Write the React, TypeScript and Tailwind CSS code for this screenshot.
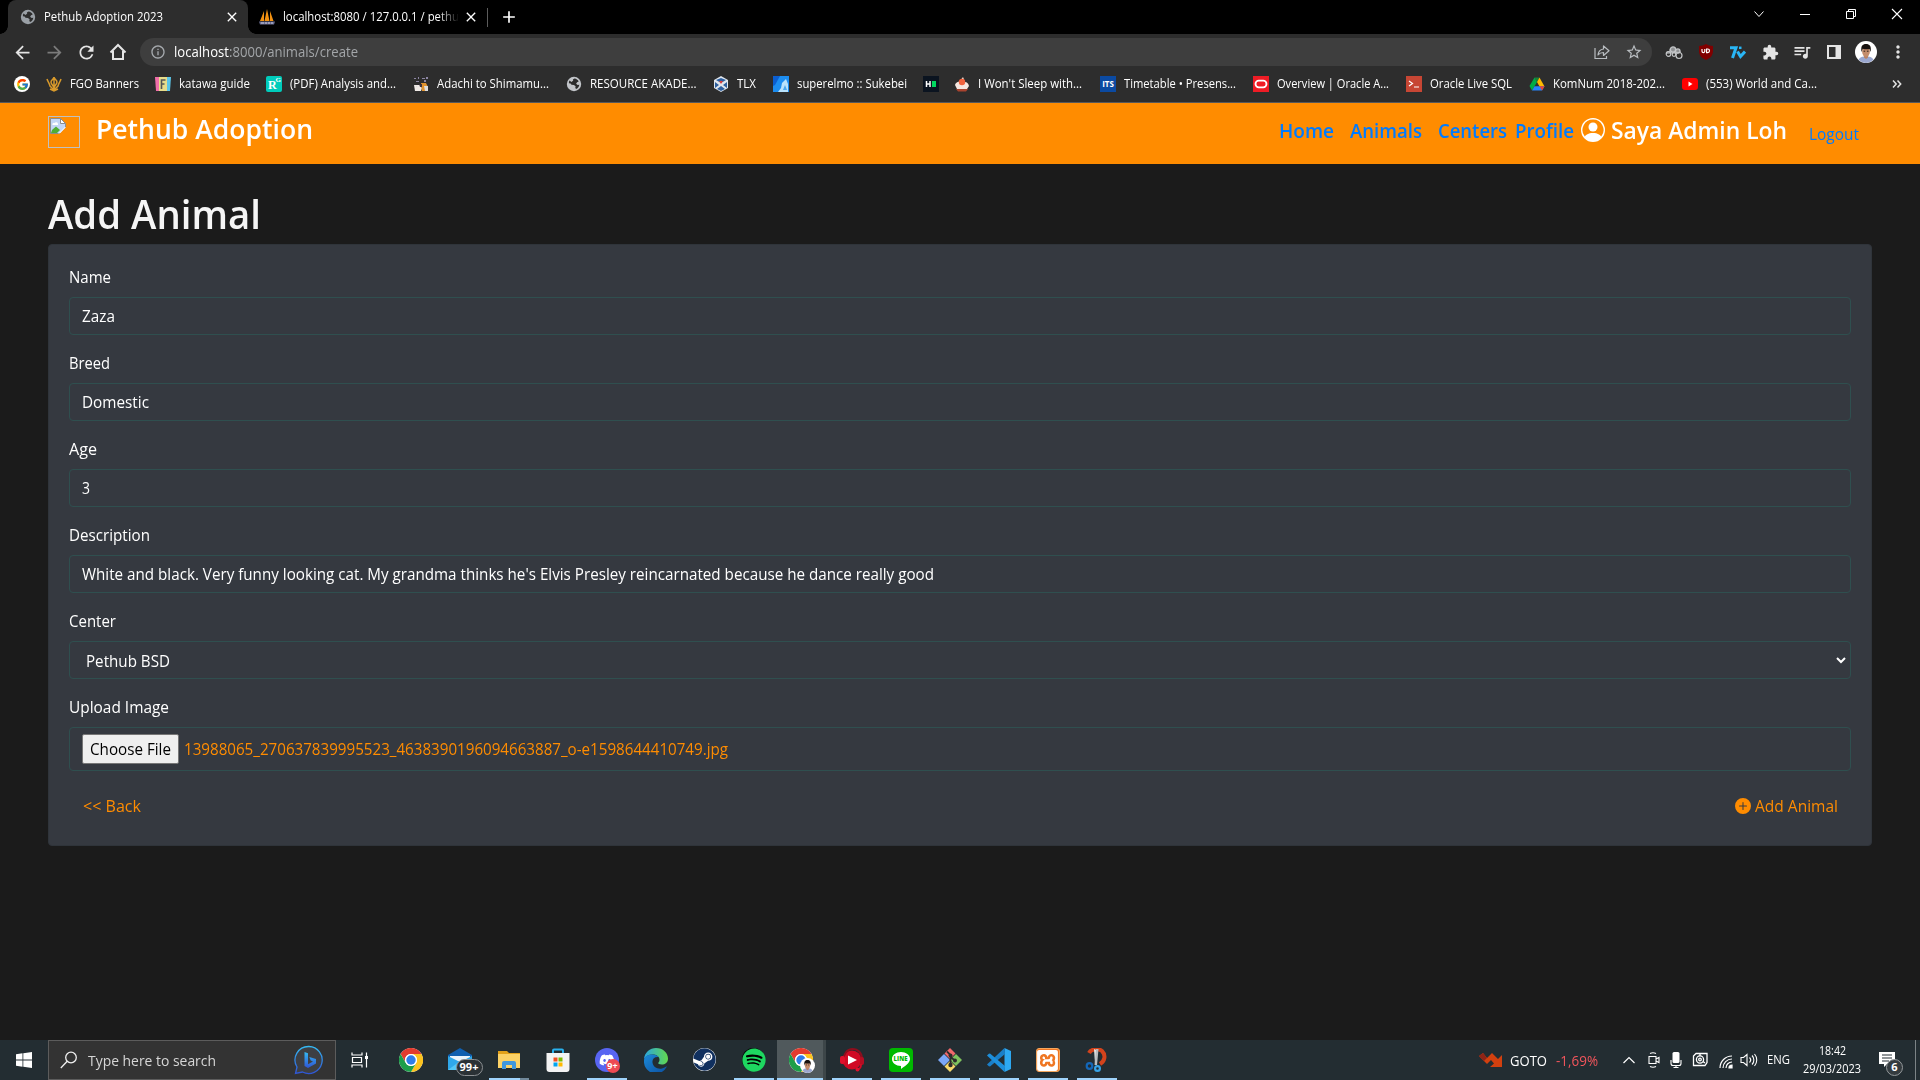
import { useLayoutEffect, useRef, type ReactNode } from "react";
import {
  MdArrowBack,
  MdArrowForward,
  MdRefresh,
  MdInfoOutline,
  MdStarBorder,
  MdExtension,
  MdQueueMusic,
  MdClose,
  MdAdd,
  MdMoreVert,
} from "react-icons/md";
import { FcGoogle } from "react-icons/fc";
import { BsPersonCircle, BsPlusCircleFill } from "react-icons/bs";
import { FaSpotify, FaDiscord, FaSteam } from "react-icons/fa";
import { SiXampp } from "react-icons/si";

/* Text squeezed or stretched horizontally to an exact width. */
function Fit({ w, children, className = "" }: { w: number; children: ReactNode; className?: string }) {
  const ref = useRef<HTMLSpanElement>(null);
  useLayoutEffect(() => {
    const el = ref.current;
    if (el && el.offsetWidth) el.style.transform = `scaleX(${w / el.getBoundingClientRect().width})`;
  }, [w]);
  return (
    <span className={`inline-flex shrink-0 ${className}`} style={{ width: w }}>
      <span ref={ref} className="inline-block shrink-0 origin-left whitespace-pre">
        {children}
      </span>
    </span>
  );
}

function Globe({ color }: { color: string }) {
  return (
    <svg viewBox="0 0 16 16" className="size-4 shrink-0">
      <circle cx="8" cy="8" r="7.2" fill={color} />
      <path d="M8.5 2.6c1.8.3 3.4 1.3 4.2 3l-1.6.7-1 1.5 1.6 1.1 1.6-.2c-.2 2-1.600 3.700-3.300 4.300l-.7-1.200.3-1.600-1.700-1.200-2.400-.3-.9-1.300-1.700-.2c-.1-1 .1-1.900.6-2.700l2 1.400 1.700-1.300-.3-1.200z" fill="#2d2d2d" />
    </svg>
  );
}

function Face({ size }: { size: number }) {
  return (
    <svg viewBox="0 0 22 22" width={size} height={size} className="shrink-0">
      <circle cx="11" cy="11" r="11" fill="#fff" />
      <path d="M3.500 18.800c1.500-3 4-3.600 7.500-3.600s6 .6 7.500 3.600A11 11 0 0 1 11 22a11 11 0 0 1-7.500-3.200z" fill="#9aa7cf" />
      <path d="M9 13h4v3.500l-2 1.500-2-1.500z" fill="#b98263" />
      <ellipse cx="11" cy="10.500" rx="3.900" ry="5.200" fill="#c48d6c" />
      <path d="M6.600 11C5.500 5 7.500 3 11 3s5.700 2 4.600 8l-1.100-3c-2 .3-4.800.3-6.800-.3z" fill="#17120f" />
      <path d="M8.600 10.200h1.600M11.900 10.200h1.600" stroke="#17120f" strokeWidth=".9" />
    </svg>
  );
}

/* ---------- Browser ---------- */

function Tabs() {
  return (
    <div className="flex h-[34px] bg-black pl-2 text-xs text-white">
      <div className="relative flex w-60 items-center rounded-t-lg bg-[#2d2d2d] pl-3">
        <span className="absolute bottom-0 -left-2 size-2 bg-[radial-gradient(circle_at_0_0,#000_7.500px,#2d2d2d_8px)]" />
        <span className="absolute -right-2 bottom-0 size-2 bg-[radial-gradient(circle_at_100%_0,#000_7.500px,#2d2d2d_8px)]" />
        <Globe color="#9aa0a6" />
        <Fit w={119} className="ml-2">Pethub Adoption 2023</Fit>
        <MdClose className="ml-[61px] size-4 shrink-0" />
      </div>
      <div className="flex w-[239px] items-center pl-[11px]">
        <svg viewBox="0 0 16 16" className="size-4 shrink-0">
          <path d="M1 12 5 2v10zM5.500 12 8 0l2.500 12zM11 12V2l3.500 10z" fill="#f29111" />
          <path d="M0 12.500h16l-1 3H1z" fill="#6c6f93" />
          <path d="M2 14h3M6 14h2M9 14h2M12 14h2" stroke="#c7c9dd" strokeWidth="1" />
        </svg>
        <Fit w={176} className="mr-1 ml-2 [mask-image:linear-gradient(to_right,#000_88%,transparent)]">
          localhost:8080 / 127.0.0.1 / pethu
        </Fit>
        <MdClose className="size-4 shrink-0" />
      </div>
      <div className="mt-2 h-[19px] w-px bg-[#5c5c5c]" />
      <MdAdd className="mt-[7px] ml-[11px] size-5" />
      <div className="ml-auto flex items-start pt-[6px]">
        <div className="flex w-[46px] justify-center">
          <svg viewBox="0 0 16 16" className="size-4"><path d="m3.500 5.500 4.500 5 4.500-5" fill="none" stroke="#fff" strokeWidth="1" /></svg>
        </div>
        <div className="flex w-[46px] justify-center">
          <svg viewBox="0 0 16 16" className="size-4"><path d="M3 8.500h10" stroke="#fff" /></svg>
        </div>
        <div className="flex w-[46px] justify-center">
          <svg viewBox="0 0 16 16" className="size-4"><path d="M3.500 5.500h7v7h-7zM5.500 5.500v-2h7v7h-2" fill="none" stroke="#fff" /></svg>
        </div>
        <div className="flex w-[46px] justify-center">
          <svg viewBox="0 0 16 16" className="size-4"><path d="m3 3 10 10M13 3 3 13" stroke="#fff" strokeWidth="1.100" /></svg>
        </div>
      </div>
    </div>
  );
}

function Cell({ children }: { children: ReactNode }) {
  return <div className="flex w-8 shrink-0 items-center justify-center">{children}</div>;
}

function Toolbar() {
  return (
    <div className="flex h-9 items-center bg-[#2d2d2d] pl-[6px] text-[#e4e4e4]">
      <Cell><MdArrowBack className="size-[21px]" /></Cell>
      <Cell><MdArrowForward className="size-[21px] text-[#7b7b7b]" /></Cell>
      <Cell><MdRefresh className="size-[21px]" /></Cell>
      <Cell>
        <svg viewBox="0 0 18 18" className="size-[18px]">
          <path d="M1.500 9.500 9 2l7.500 7.500M4 8v8h10V8" fill="none" stroke="#e4e4e4" strokeWidth="2" />
        </svg>
      </Cell>
      <div className="ml-[6px] flex h-7 w-[1512px] items-center rounded-full bg-[#3e3e3e] pl-[10px]">
        <MdInfoOutline className="size-4 text-[#a6aaae]" />
        <Fit w={184} className="ml-2 text-[14px] leading-5 text-[#a3a6a9]">
          <span className="text-white">localhost</span>:8000/animals/create
        </Fit>
        <div className="ml-auto flex pr-[2px] text-[#b9bdc1]">
          <Cell>
            <svg viewBox="0 0 16 16" className="size-4" fill="none" stroke="currentColor" strokeWidth="1.200">
              <path d="M1 4v10.500h11.500V12" />
              <path d="M9.500 2v3C6 5.500 4.300 7.600 4 11c1.400-1.800 3-2.500 5.500-2.500v3l5.500-4.800z" strokeLinejoin="round" />
            </svg>
          </Cell>
          <Cell><MdStarBorder className="size-[18px]" /></Cell>
        </div>
      </div>
      <div className="ml-[6px] flex">
        <Cell>
          <svg viewBox="0 0 18 16" className="h-4 w-[18px]">
            <path d="M1 10a3 3 0 0 1 3-3 4 4 0 0 1 7.500-2A4 4 0 0 1 16 9z" fill="#8f9193" />
            <g fill="none" stroke="#c3c5c7" strokeWidth="1.200">
              <circle cx="3.500" cy="10" r="2.300" /><circle cx="8" cy="5.500" r="2.600" /><circle cx="12.800" cy="7" r="2.200" /><circle cx="14" cy="11.500" r="3" /><circle cx="9" cy="10.500" r="1.800" />
            </g>
          </svg>
        </Cell>
        <Cell>
          <svg viewBox="0 0 16 16" className="size-4">
            <path d="M8 0c2 1.300 4.500 1.800 7 2v5c0 4.500-3 7.500-7 9-4-1.500-7-4.500-7-9V2c2.500-.2 5-.7 7-2z" fill="#800000" />
            <path d="M4 5v2.200a1.400 1.400 0 0 0 2.800 0V5M8.600 5v3.600h1.100a1.800 1.800 0 0 0 0-3.600z" fill="none" stroke="#fff" strokeWidth="1.200" />
          </svg>
        </Cell>
        <Cell>
          <svg viewBox="0 0 16 16" className="size-4" fill="none" stroke="#29b6f6" strokeWidth="3">
            <path d="M0 3.800h6L2.500 14M7.500 7.500l3 5L15 7.500" /><path d="M9 3.800h2.500" strokeWidth="2.500" />
          </svg>
        </Cell>
        <Cell><MdExtension className="size-[17px]" /></Cell>
        <Cell><MdQueueMusic className="size-5" /></Cell>
        <Cell>
          <svg viewBox="0 0 14 14" className="size-[14px]"><path d="M0 0h14v14H0zM2 2v10h6.500V2z" fill="#e4e4e4" fillRule="evenodd" /></svg>
        </Cell>
        <Cell><Face size={22} /></Cell>
        <Cell><MdMoreVert className="size-5" /></Cell>
      </div>
    </div>
  );
}

const icon = "size-4 shrink-0";

/* cell: distance to the next bookmark; w: label width */
const bookmarks: { icon: ReactNode; label?: string; w?: number; cell: number }[] = [
  { cell: 32, icon: <span className="flex size-4 items-center justify-center rounded-full bg-white"><FcGoogle className="size-[13px]" /></span> },
  {
    cell: 109, label: "FGO Banners", w: 69,
    icon: (
      <svg viewBox="0 0 16 16" className={icon} fill="none" stroke="#d99a2b" strokeWidth="1.500">
        <path d="M8 1v11M5 6c0-2 3-3 3-5 0 2 3 3 3 5S9 9 8 12C7 9 5 8 5 6zM1 3c1 3 2 3 3 7l4 4 4-4c1-4 2-4 3-7M4 13l4 2 4-2" />
      </svg>
    ),
  },
  {
    cell: 111, label: "katawa guide", w: 71,
    icon: (
      <svg viewBox="0 0 16 16" className={icon}>
        <path d="M0 1h4v14H1z" fill="#f06ea9" /><path d="M4 1h8v14H4z" fill="#e8dc8a" /><path d="M12 1h4l-1 14h-3z" fill="#5cc6e8" />
        <path d="M6.500 13V4h4M6.500 8h3" fill="none" stroke="#555" strokeWidth="1.600" />
      </svg>
    ),
  },
  {
    cell: 147, label: "(PDF) Analysis and...", w: 106,
    icon: (
      <span className="relative flex size-4 shrink-0 rounded-[2px] bg-[#00ccbb] font-['Liberation_Serif'] text-[12px] leading-4 font-bold text-white">
        <span className="pt-px pl-[2px]">R</span>
        <span className="absolute top-0 right-px text-[7px] leading-[8px]">G</span>
      </span>
    ),
  },
  {
    cell: 153, label: "Adachi to Shimamu...", w: 112,
    icon: (
      <svg viewBox="0 0 16 16" className={icon}>
        <path d="M1 2h2v1H1zM5 1h1v2H5zM9 2h3v1H9zM13 1h2v2h-2zM3 5h3v1H3zM11 4h2v2h-2z" fill="#8d86a3" />
        <path d="M1 9h6l2 3-1 3H2z" fill="#efeae6" /><path d="M8 7h5l2 4-2 4H9z" fill="#e0932f" /><path d="M11 10h4v5h-3zM3 10h1v1H3z" fill="#ddd" /><path d="M6 8h3v3H7z" fill="#3b3340" />
      </svg>
    ),
  },
  { cell: 147, label: "RESOURCE AKADE...", w: 106.5, icon: <Globe color="#c2c5c9" /> },
  {
    cell: 60, label: "TLX", w: 19,
    icon: (
      <svg viewBox="0 0 16 16" className={icon}>
        <path d="m8 0 7 4v8l-7 4-7-4V4z" fill="#dfe6ee" /><path d="m8 2 5 2-5 3-5-3zM2 6l4 3-4 3zM14 6l-4 3 4 3zM4 13l4-3 4 3-4 2z" fill="#2d5f9e" /><path d="M6 5h4L8 8z" fill="#d8403c" />
      </svg>
    ),
  },
  {
    cell: 150, label: "superelmo :: Sukebei", w: 110,
    icon: (
      <svg viewBox="0 0 16 16" className={icon}>
        <path d="M0 0h16v16H0z" fill="#1c8df0" /><path d="M0 0h7L2 9l-2 1z" fill="#0b5ed0" /><path d="M13 3 9 7l-1 5-3 4h10V8z" fill="#b9e2fb" /><path d="m12 9-2 5h4z" fill="#4aa7ee" />
      </svg>
    ),
  },
  {
    cell: 31,
    icon: (
      <svg viewBox="0 0 16 16" className={icon}>
        <path d="M0 0h16v16H0z" fill="#0b1420" /><path d="M3.500 5v6M7 5v6M3.500 8H7" stroke="#fff" strokeWidth="1.500" /><path d="M9 5h4v6H9z" fill="#00d860" />
      </svg>
    ),
  },
  {
    cell: 146, label: "I Won't Sleep with...", w: 104,
    icon: (
      <svg viewBox="0 0 16 16" className={icon}>
        <path d="M1 9c1-3 3-3 5-4l3-4 2 5c2 0 3 1 4 4l-2 3H3z" fill="#f6e6df" /><circle cx="8" cy="6" r="3.200" fill="#f0623d" /><path d="M2 13h12l-2 2.500H4z" fill="#a8432e" />
      </svg>
    ),
  },
  {
    cell: 153, label: "Timetable • Presens...", w: 112,
    icon: <span className="flex size-4 shrink-0 items-center justify-center bg-[#0b4aa2] text-[8px] font-bold text-white">ITS</span>,
  },
  {
    cell: 153, label: "Overview | Oracle A...", w: 112,
    icon: (
      <svg viewBox="0 0 16 16" className={icon}>
        <path d="M0 0h16v16H0z" fill="#ee1c25" /><rect x="2.500" y="4.700" width="11" height="6.600" rx="3.300" fill="none" stroke="#fff" strokeWidth="1.800" />
      </svg>
    ),
  },
  {
    cell: 123, label: "Oracle Live SQL", w: 82,
    icon: (
      <svg viewBox="0 0 16 16" className={icon}>
        <path d="M0 0h16v16H0z" fill="#c74634" /><path d="m3 5 3.500 2.500L3 10M8 11h5" fill="none" stroke="#fff" strokeWidth="1.200" />
      </svg>
    ),
  },
  {
    cell: 153, label: "KomNum 2018-202...", w: 112,
    icon: (
      <svg viewBox="0 0 16 16" className={icon}>
        <path d="M5.500 1.500h5L8 6z" fill="#188038" /><path d="M5.500 1.500 8 6 3 14.500.5 10z" fill="#00ac47" /><path d="M10.500 1.500 8 6l2.500 4.500h5z" fill="#ffba00" /><path d="M5.500 10.300h10L13 14.500H3z" fill="#2684fc" /><path d="M10.500 10.300h5L13 14.500z" fill="#ea4335" />
      </svg>
    ),
  },
  {
    cell: 150, label: "(553) World and Ca...", w: 111,
    icon: (
      <svg viewBox="0 0 16 16" className={icon}>
        <rect y="2" width="16" height="12" rx="3" fill="#f00" /><path d="m6.500 5.500 4 2.500-4 2.500z" fill="#fff" />
      </svg>
    ),
  },
];

function Bookmarks() {
  return (
    <div className="flex h-[33px] items-center border-b border-[#57585a] bg-[#2d2d2d] pb-[4px] pl-[14px] text-xs text-white">
      {bookmarks.map((b, i) => (
        <div key={i} className="flex shrink-0 items-center gap-2" style={{ width: b.cell }}>
          {b.icon}
          {b.label && <Fit w={b.w!} className="mb-px">{b.label}</Fit>}
        </div>
      ))}
      <svg viewBox="0 0 10 10" className="ml-[60px] size-[10px]"><path d="m1 1.500 3.200 3.500L1 8.500M5.500 1.500 8.700 5 5.500 8.500" fill="none" stroke="#e4e4e4" strokeWidth="1.500" /></svg>
    </div>
  );
}

/* ---------- Page ---------- */

function SiteHeader() {
  return (
    <header className="flex h-[61px] bg-[#ff8c00] pl-12 font-semibold text-white">
      <div className="mt-[13px] size-8 border border-[#c0c0c0] p-px">
        <svg viewBox="0 0 16 16" className="size-4">
          <path d="M.5.500h10l5 5v10H.5z" fill="#c3d6f5" stroke="#8c8c8c" />
          <path d="M10.500.500v5h5z" fill="#fff" stroke="#8c8c8c" strokeLinejoin="round" />
          <path d="M2.500 7a1.500 1.500 0 0 1 2-2 2 2 0 0 1 3.500 1v1z" fill="#fff" />
          <path d="m1 15 1-3 4-3.500L10 12l-3 3z" fill="#4fae35" />
          <path d="M16.500 8.500 9 16.500h7.500z" fill="#ff8c00" />
          <path d="m15.500 9-6.500 6.500" stroke="#fff" />
        </svg>
      </div>
      <Fit w={217} className="mt-[5px] ml-4 text-[27.500px] leading-[42px]">Pethub Adoption</Fit>
      <nav className="ml-auto flex text-[20px] leading-[30px] text-[#007bff]">
        <Fit w={55} className="mt-[13px]">Home</Fit>
        <Fit w={72} className="mt-[13px] ml-4">Animals</Fit>
        <Fit w={69} className="mt-[13px] ml-4">Centers</Fit>
        <Fit w={59} className="mt-[13px] ml-2">Profile</Fit>
      </nav>
      <BsPersonCircle className="mt-[15px] ml-[7px] size-6" />
      <Fit w={176} className="mt-[9px] ml-[6px] text-[24px] leading-9">Saya Admin Loh</Fit>
      <Fit w={50} className="mt-[19px] mr-[61px] ml-[22px] text-[15.500px] leading-6 font-normal text-[#007bff]">Logout</Fit>
    </header>
  );
}

const fields = [
  { label: "Name", lw: 42, value: "Zaza", vw: 33 },
  { label: "Breed", lw: 41, value: "Domestic", vw: 67 },
  { label: "Age", lw: 28, value: "3", vw: 8 },
  { label: "Description", lw: 81, value: "White and black. Very funny looking cat. My grandma thinks he's Elvis Presley reincarnated because he dance really good", vw: 852 },
];

function Field({ label, lw, children }: { label: string; lw: number; children: ReactNode }) {
  return (
    <div className="mb-4 flex flex-col">
      <Fit w={lw} className="mb-2 leading-6">{label}</Fit>
      {children}
    </div>
  );
}

const control = "flex items-center rounded border border-[#2f4f4f] px-3 leading-6";

function Page() {
  return (
    <main className="flex grow flex-col bg-[#1b1b1b] px-12 pt-[26px]">
      <h1 className="mb-[6px] flex h-12 text-[39.500px] leading-[48px] font-semibold text-[#f5f5f5]">
        <Fit w={213}>Add Animal</Fit>
      </h1>
      <section className="h-[602px] rounded border border-[#2f343a] bg-[#353940] p-5 text-[15.500px] text-white">
        {fields.map((f) => (
          <Field key={f.label} label={f.label} lw={f.lw}>
            <div className={`${control} h-[38px]`}><Fit w={f.vw}>{f.value}</Fit></div>
          </Field>
        ))}
        <Field label="Center" lw={47}>
          <div className={`${control} h-[38px]`}>
            <Fit w={84} className="mt-[2px] ml-1">Pethub BSD</Fit>
            <svg viewBox="0 0 10 8" className="-mr-2 mb-[1px] ml-auto h-2 w-[10px]"><path d="m1 2 4 4 4-4" fill="none" stroke="#fff" strokeWidth="2" /></svg>
          </div>
        </Field>
        <Field label="Upload Image" lw={100}>
          <div className={`${control} h-11 text-[#ff8c00]`}>
            <span className="flex h-[30px] w-[97px] items-center justify-center rounded-[2px] border border-[#767676] bg-[#efefef] text-black">
              <Fit w={81}>Choose File</Fit>
            </span>
            <Fit w={544} className="ml-[5px]">13988065_270637839995523_4638390196094663887_o-e1598644410749.jpg</Fit>
          </div>
        </Field>
        <div className="flex h-[38px] items-center justify-between px-[13px] text-[#ff8c00]">
          <Fit w={58} className="mt-[2px] ml-px">{"<< Back"}</Fit>
          <div className="flex items-center gap-1">
            <BsPlusCircleFill className="size-4" />
            <Fit w={83} className="mt-[2px]">Add Animal</Fit>
          </div>
        </div>
      </section>
    </main>
  );
}

/* ---------- Taskbar ---------- */

function Chrome() {
  return (
    <svg viewBox="0 0 24 24" className="size-6">
      <circle cx="12" cy="12" r="12" fill="#fff" />
      <path d="M1.600 6A12 12 0 0 1 22.400 6H12a6 6 0 0 0-5.200 9z" fill="#e33b2e" />
      <path d="M22.400 6A12 12 0 0 1 12 24l5.200-9A6 6 0 0 0 12 6z" fill="#fcc31e" />
      <path d="M1.600 6A12 12 0 0 0 12 24l5.200-9a6 6 0 0 1-10.400 0z" fill="#1e9e4a" />
      <circle cx="12" cy="12" r="6" fill="#fff" />
      <circle cx="12" cy="12" r="4.700" fill="#2f7de9" />
    </svg>
  );
}

const apps: { icon: ReactNode; open?: boolean; active?: boolean; split?: boolean }[] = [
  { icon: <Chrome /> },
  {
    icon: (
      <div className="relative">
        <svg viewBox="0 0 24 24" className="size-6">
          <path d="M0 7 12 0l12 7v5H0z" fill="#0f5fb0" /><path d="M2 8h20v6H2z" fill="#e9f3fb" /><path d="M0 8l12 6 12-6v14H0z" fill="#2fa8ea" /><path d="m0 22 12-9 12 9z" fill="#55c8f5" />
        </svg>
        <span className="absolute top-[11px] left-2 flex h-[17px] w-[27px] items-center justify-center rounded-full border border-[#8b8f92] bg-[#2a3135] text-[11px] font-bold text-white">99+</span>
      </div>
    ),
  },
  {
    open: true, split: true,
    icon: (
      <svg viewBox="0 0 24 24" className="size-6">
        <path d="M1 3h9l2 2h11v5H1z" fill="#e3a21a" /><path d="M1 6h22v14H1z" fill="#fcd266" /><path d="M5 21v-6a2 2 0 0 1 2-2h10a2 2 0 0 1 2 2v6h-4v-4H9v4z" fill="#3f97dd" />
      </svg>
    ),
  },
  {
    icon: (
      <svg viewBox="0 0 24 24" className="size-6">
        <path d="M7 5V2.500A1 1 0 0 1 8 1.500h8a1 1 0 0 1 1 1V5" fill="none" stroke="#29b1ee" strokeWidth="2" /><path d="M.500 5h23v16a3 3 0 0 1-3 3h-17a3 3 0 0 1-3-3z" fill="#f3f3f3" />
        <path d="M7.500 9.500h4v4h-4z" fill="#f25022" /><path d="M12.500 9.500h4v4h-4z" fill="#7fba00" /><path d="M7.500 14.500h4v4h-4z" fill="#00a4ef" /><path d="M12.500 14.500h4v4h-4z" fill="#ffb900" />
      </svg>
    ),
  },
  {
    open: true,
    icon: (
      <div className="relative flex size-6 items-center justify-center rounded-full bg-[#5865f2]">
        <FaDiscord className="size-4 text-white" />
        <span className="absolute top-[11px] left-[11px] flex size-[14px] items-center justify-center rounded-full bg-[#ed4a52] text-[9px] font-bold text-white">9+</span>
      </div>
    ),
  },
  {
    icon: (
      <svg viewBox="0 0 24 24" className="size-6">
        <defs>
          <linearGradient id="edgeTop" x1="0" x2="1"><stop offset="0" stopColor="#2aa5e0" /><stop offset="1" stopColor="#62d84e" /></linearGradient>
          <linearGradient id="edgeLow" x1="0" x2="1" y1="0" y2="1"><stop offset="0" stopColor="#1b8ad8" /><stop offset="1" stopColor="#0c4fa0" /></linearGradient>
        </defs>
        <path d="M0 11C.500 4.500 6 0 12 0c7 0 12 5 12 10.500 0 4-3 6-6.200 6-2.500 0-4-.8-3.500-1.700 1-1.300 1.200-2 1.200-3.100C15.500 8.500 12.500 6.500 8.500 6.500 4.500 6.500 1.500 8.500 0 11z" fill="url(#edgeTop)" />
        <path d="M0 12.500c0-4 4-6 8.500-6 2.500 0 5 1 6 2.500-4-.5-6.500 2-6 5.500.500 4.500 5 7 9.500 6 2-.5 3.300-1.500 4.200-2 .5-.2.700.2.400.600A12 12 0 0 1 0 12.500z" fill="url(#edgeLow)" />
      </svg>
    ),
  },
  {
    icon: <span className="flex size-[23px] items-center justify-center rounded-full bg-white"><FaSteam className="size-[23px] text-[#10305f]" /></span>,
  },
  { open: true, icon: <span className="flex size-[23px] items-center justify-center rounded-full bg-black"><FaSpotify className="size-6 shrink-0 text-[#1ed760]" /></span> },
  {
    active: true,
    icon: (
      <div className="relative ml-[2px]">
        <Chrome />
        <span className="absolute top-[10px] left-[11px]"><Face size={15} /></span>
      </div>
    ),
  },
  {
    open: true,
    icon: (
      <svg viewBox="0 0 24 24" className="size-6">
        <circle cx="12" cy="12" r="9.500" fill="#d00a24" /><path d="M3.500 12C3.500 6 7 1 12.500 1S22 5 22 11" fill="none" stroke="#8d0e1d" strokeWidth="2" />
        <rect x="0" y="8" width="5" height="8" rx="2" fill="#e0102c" /><rect x="20" y="9" width="4" height="8" rx="2" fill="#b30d22" /><path d="M21 16c0 4-1 5-4 5.500" fill="none" stroke="#d00a24" strokeWidth="2" /><circle cx="17.500" cy="21.500" r="2" fill="#e0102c" />
        <path d="M8 7.500 17 12l-9 4.500z" fill="#fff" />
      </svg>
    ),
  },
  {
    open: true,
    icon: (
      <span className="relative flex size-6 items-center justify-center rounded-[4px] bg-[#00b900]">
        <svg viewBox="0 0 24 24" className="size-6"><path d="M12 4c5 0 9 3 9 7 0 4.500-6 7.500-9 10v-3c-5 0-9-3-9-7s4-7 9-7z" fill="#fff" /></svg>
        <span className="absolute top-[6px] text-[6px] leading-[10px] font-extrabold text-[#00b900]">LINE</span>
      </span>
    ),
  },
  {
    open: true,
    icon: (
      <svg viewBox="0 0 24 24" className="size-6">
        <path d="m12 0 5.500 5.500L12 11 6.500 5.500z" fill="#f1696b" /><path d="m6 6 6 6-6 6-6-6z" fill="#7ba7f7" /><path d="m18 6 6 6-6 6-6-6z" fill="#7fc35e" /><path d="m12 13 5.500 5.500L12 24l-5.500-5.500z" fill="#f8d96a" />
        <path d="M9 3.500 12.500 7v11M12.500 9l5 4" fill="none" stroke="#2c2c2c" strokeWidth="1.800" /><circle cx="12.500" cy="7.500" r="2" fill="#2c2c2c" /><circle cx="12.500" cy="17" r="2.200" fill="#2c2c2c" /><circle cx="17" cy="12.500" r="2" fill="#2c2c2c" />
      </svg>
    ),
  },
  {
    open: true,
    icon: (
      <svg viewBox="0 0 24 24" className="size-6">
        <path d="M17.500 0 24 3v18l-6.500 3z" fill="#2da8f1" /><path d="m17.500 0 .5 6L3 18.500l-1.200-.2L0 16.500z" fill="#1a7fc8" /><path d="M17.500 24 18 18 3 5.500l-1.200.2L0 7.500z" fill="#1d8fdc" />
      </svg>
    ),
  },
  {
    open: true,
    icon: <span className="flex size-6 items-center justify-center rounded-[3px] border border-[#f5a65c] bg-[#ef7622]"><SiXampp className="size-[21px] text-white" /></span>,
  },
  {
    open: true,
    icon: (
      <svg viewBox="0 0 24 24" className="size-6">
        <path d="M4 5c2-4 9-5 13-2 4 4 3 10-2 13" fill="none" stroke="#d3431c" strokeWidth="4" />
        <path d="m9 1 2.500 1 .5 15-2-2z" fill="#e8e8e8" /><path d="M11 1h2.500L12 17H9.500z" fill="#b9bdc0" />
        <circle cx="4.500" cy="18" r="2.800" fill="none" stroke="#1467b8" strokeWidth="2.200" /><circle cx="12.500" cy="20.500" r="2.400" fill="none" stroke="#37a3e8" strokeWidth="2.200" />
      </svg>
    ),
  },
];

function Taskbar() {
  return (
    <footer className="flex h-10 shrink-0 items-stretch bg-[#232d32] text-white">
      <div className="flex w-12 items-center justify-center">
        <svg viewBox="0 0 16 16" className="size-4"><path d="m0 2.200 6.500-.9v6.300H0zM7.300 1.200 16 0v7.600H7.300zM0 8.400h6.500v6.300L0 13.800zM7.300 8.400H16V16l-8.700-1.200z" fill="#fff" /></svg>
      </div>
      <div className="flex w-72 items-center border border-[#5c5c5c] bg-[#333] pl-[11px]">
        <svg viewBox="0 0 18 18" className="size-[18px]" fill="none" stroke="#f0f0f0" strokeWidth="1.300"><circle cx="11" cy="6.500" r="5.300" /><path d="M7.200 10.300.8 17" /></svg>
        <Fit w={128} className="ml-[10px] text-[15px] text-[#d6d6d6]">Type here to search</Fit>
        <svg viewBox="0 0 30 30" className="ml-[78px] size-[30px]">
          <defs><linearGradient id="bing" x1="0" y1="0" x2="0" y2="1"><stop offset="0" stopColor="#35b9f2" /><stop offset="1" stopColor="#2f55d4" /></linearGradient></defs>
          <path d="M15 1.500A13.500 13.500 0 1 1 8.500 27L1.500 28.500 3 22A13.500 13.500 0 0 1 15 1.500z" fill="#3d3f43" stroke="url(#bing)" strokeWidth="1.300" />
          <path d="m10.500 7 3.500 1.300v11L19 16.500l-2.300-1-1.400-3.600L22 14v4.500L14 23l-3.500-2z" fill="url(#bing)" />
        </svg>
      </div>
      <div className="flex w-[50px] items-center justify-center pr-[2px]">
        <svg viewBox="0 0 18 16" className="h-4 w-[18px]" fill="none" stroke="#fff" strokeWidth="1.200"><path d="M1 .500v2.500h10V.500M1 15.500V13h10v2.500M1.500 5.500h9v5h-9zM15.500.500v15" /><path d="M14 4h3v3h-3z" fill="#fff" stroke="none" /></svg>
      </div>
      {apps.map((a, i) => (
        <div key={i} className={`flex w-[49px] shrink-0 flex-col items-center justify-between pt-2 ${a.active ? "-ml-px mr-px border-r-[3px] border-[#3d4649] bg-[#50595c]" : ""}`}>
          {a.icon}
          {a.open && (
            <div className="flex h-[2px] w-10 bg-[#9fd3fb]">{a.split && <div className="ml-auto w-[9px] bg-[#71899b]" />}</div>
          )}
          {a.active && <div className="h-[2px] w-full bg-[#9fd3fb]" />}
        </div>
      ))}
      <div className="ml-auto flex items-center">
        <svg viewBox="0 0 24 16" className="h-4 w-6"><path d="m0 4 4-3 4 5 5-5 6 6 4-4v12H11l4-3.500L12 8 8 12z" fill="#d2400f" /><path d="m0 4 4-3 4 5-3 3z" fill="#8e2417" /></svg>
        <Fit w={37} className="ml-[7px] text-[14px]">GOTO</Fit>
        <Fit w={42} className="ml-[9px] text-[14px] text-[#f2555c]">-1,69%</Fit>
        <svg viewBox="0 0 12 8" className="ml-[25px] h-2 w-3" fill="none" stroke="#fff" strokeWidth="1.200"><path d="m.5 7 5.500-5.500L11.500 7" /></svg>
        <svg viewBox="0 0 12 16" className="ml-[13px] h-4 w-3" fill="none" stroke="#fff" strokeWidth="1.100"><path d="M1 4.500h7v7H1zM8 7l3-1.500v5L8 9M2 1.500c2-1 4-1 6 0M2 14.500c2 1 4 1 6 0" /></svg>
        <svg viewBox="0 0 12 16" className="ml-[10px] h-4 w-3"><rect x="2.500" width="7" height="11" rx="1.500" fill="#fff" /><path d="M1 8v3.500c0 1 1 2 2 2h6c1 0 2-1 2-2V8M6 13.500V16M3.500 15.500h5" fill="none" stroke="#fff" strokeWidth="1.100" /></svg>
        <svg viewBox="0 0 16 16" className="ml-[10px] size-4" fill="none" stroke="#fff" strokeWidth="1.300"><path d="M4 1.500h11v9l-2 3H1.500V4z" /><circle cx="8" cy="7.500" r="3.600" /><circle cx="8" cy="7.500" r="1.300" /><path d="M8 1.500v2.400M13 11l-2-1.500" /></svg>
        <svg viewBox="0 0 14 14" className="ml-[11px] mt-[3px] size-[14px]" fill="none" stroke="#fff" strokeWidth="1.200"><path d="M1 13A12 12 0 0 1 13 1M4 13a9 9 0 0 1 9-9M7 13a6 6 0 0 1 6-6" /><path d="M10 13a3 3 0 0 1 3-3v3z" fill="#fff" /></svg>
        <svg viewBox="0 0 18 14" className="ml-[7px] h-[14px] w-[18px]" fill="none" stroke="#fff" strokeWidth="1.100"><path d="M1 4.500h2.500L7 1.500v11L3.500 9.500H1zM9.500 4.500c1.500 1.500 1.500 3.500 0 5M12 2.500c2.500 2.500 2.500 6.500 0 9M14.500 1c3 3.500 3 8.500 0 12" /></svg>
        <Fit w={23} className="ml-[9px] text-[12px]">ENG</Fit>
        <div className="ml-[12px] flex w-[60px] flex-col items-center text-[12px] leading-[18px]">
          <Fit w={27}>18:42</Fit>
          <Fit w={58}>29/03/2023</Fit>
        </div>
        <div className="relative ml-[17px] mr-5 size-4">
          <svg viewBox="0 0 16 16" className="size-4"><path d="M0 0h16v12H8l-3 3v-3H0z" fill="#fff" /><path d="M3 3h10M3 6h10M3 9h7" stroke="#232d32" strokeWidth="1.100" /></svg>
          <span className="absolute top-[7px] left-[7px] flex size-[17px] items-center justify-center rounded-full border border-[#94999b] bg-[#343b3f] text-[11px] font-bold">6</span>
        </div>
        <div className="mr-1 h-10 w-px bg-[#7c8386]" />
      </div>
    </footer>
  );
}

export default function App() {
  return (
    <div className="flex h-[1080px] w-[1920px] flex-col overflow-hidden bg-[#1b1b1b] font-['Open_Sans','Noto_Sans',sans-serif]">
      <Tabs />
      <Toolbar />
      <Bookmarks />
      <SiteHeader />
      <Page />
      <Taskbar />
    </div>
  );
}
